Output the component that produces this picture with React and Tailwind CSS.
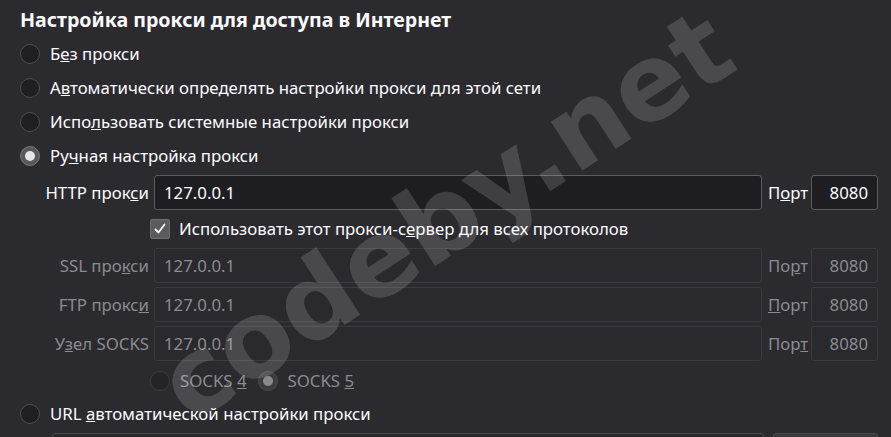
import React from 'react';

const Radio = ({ checked, disabled }) => (
    <span
        className={`relative flex h-[20px] w-[20px] shrink-0 items-center justify-center rounded-full border ${
            checked
                ? disabled
                    ? 'border-[#4a4a4f] bg-[#3c3c41]'
                    : 'border-[#75757a] bg-[#58585d]'
                : disabled
                ? 'border-[#3a3a3f] bg-[#242328]'
                : 'border-[#4d4d52] bg-[#1f1e23]'
        }`}
    >
        {checked && (
            <span className={`h-[10px] w-[10px] rounded-full ${disabled ? 'bg-[#8a8a8e]' : 'bg-[#e6e6e8]'}`} />
        )}
    </span>
);

const RadioRow = ({ children, checked }) => (
    <div className="flex h-[34px] items-center gap-[10px] pl-[20px]">
        <Radio checked={checked} />
        <span>{children}</span>
    </div>
);

const ProxyRow = ({ label, port, value, portValue, disabled }) => (
    <div className={`flex h-[35px] items-center ${disabled ? 'text-[#8b8b90]' : 'text-[#fbfbfe]'}`}>
        <div className="w-[149px] whitespace-nowrap text-right">{label}</div>
        <div
            className={`ml-[5px] flex h-[35px] w-[608px] items-center rounded-[3px] border pl-[9px] ${
                disabled ? 'border-[#3b3a40] bg-[#2a292e]' : 'border-[#5b5b60] bg-[#1e1d22]'
            }`}
        >
            {value}
        </div>
        <div className="ml-[6px] w-[38px] whitespace-nowrap">{port}</div>
        <div
            className={`ml-[5px] flex h-[35px] w-[67px] items-center justify-end rounded-[3px] border pr-[9px] ${
                disabled ? 'border-[#3b3a40] bg-[#2a292e]' : 'border-[#5b5b60] bg-[#1e1d22]'
            }`}
        >
            {portValue}
        </div>
    </div>
);

export default function App() {
    return (
        <div
            className="relative h-[437px] w-[891px] overflow-hidden bg-[#2b2a2f] text-[16.8px] text-[#fbfbfe]"
            style={{ fontFamily: '"Noto Sans", "Open Sans", sans-serif' }}
        >
            <div className="flex h-[37px] items-center pl-[20px] pt-[3px]">
                <h1 className="text-[19.6px] font-bold">Настройка прокси для доступа в Интернет</h1>
            </div>

            <RadioRow>
                Б<u>е</u>з прокси
            </RadioRow>
            <RadioRow>
                А<u>в</u>томатически определять настройки прокси для этой сети
            </RadioRow>
            <RadioRow>
                Испо<u>л</u>ьзовать системные настройки прокси
            </RadioRow>
            <RadioRow checked>
                Ру<u>ч</u>ная настройка прокси
            </RadioRow>

            <div className="mt-[2px]">
                <ProxyRow
                    label={<>HTTP прок<u>с</u>и</>}
                    port={<>П<u>о</u>рт</>}
                    value="127.0.0.1"
                    portValue="8080"
                />
            </div>

            <div className="flex h-[38px] items-center gap-[9px] pl-[150px]">
                <span className="flex h-[20px] w-[20px] items-center justify-center rounded-[2px] border border-[#6c6c71] bg-[#5a5a5f]">
                    <svg width="14" height="14" viewBox="0 0 14 14" fill="none">
                        <path d="M2.5 7.5 L5.5 10.5 L11.5 2.5" stroke="#f4f4f6" strokeWidth="1.8" strokeLinecap="round" strokeLinejoin="round" />
                    </svg>
                </span>
                <span>
                    Использовать этот прокси-с<u>е</u>рвер для всех протоколов
                </span>
            </div>

            <div className="flex flex-col gap-[4px]">
                <ProxyRow disabled label={<>SSL про<u>к</u>си</>} port={<>По<u>р</u>т</>} value="127.0.0.1" portValue="8080" />
                <ProxyRow disabled label={<>FTP прокс<u>и</u></>} port={<><u>П</u>орт</>} value="127.0.0.1" portValue="8080" />
                <ProxyRow disabled label={<>У<u>з</u>ел SOCKS</>} port={<>Пор<u>т</u></>} value="127.0.0.1" portValue="8080" />
            </div>

            <div className="flex h-[40px] items-center pl-[150px] text-[#8b8b90]">
                <Radio disabled />
                <span className="ml-[10px]">
                    SOCKS <u>4</u>
                </span>
                <span className="ml-[11px]">
                    <Radio disabled checked />
                </span>
                <span className="ml-[10px]">
                    SOCKS <u>5</u>
                </span>
            </div>

            <div className="flex h-[26px] items-center gap-[10px] pl-[20px]">
                <Radio />
                <span>
                    URL <u>а</u>втоматической настройки прокси
                </span>
            </div>

            <div className="ml-[52px] mt-[6px] flex gap-[9px]">
                <div className="h-[35px] w-[712px] rounded-[3px] border border-[#48474d] bg-[#2a292e]" />
                <div className="h-[35px] w-[105px] rounded-[3px] border border-[#48474d] bg-[#3a393e]" />
            </div>

            {/* watermark */}
            <div
                className="pointer-events-none absolute left-[446px] top-[216px] -translate-x-1/2 -translate-y-1/2 rotate-[-33deg] whitespace-nowrap text-[106px] font-bold leading-none text-white/15"
                style={{ fontFamily: '"DejaVu Sans", sans-serif' }}
            >
                codeby.net
            </div>
        </div>
    );
}
